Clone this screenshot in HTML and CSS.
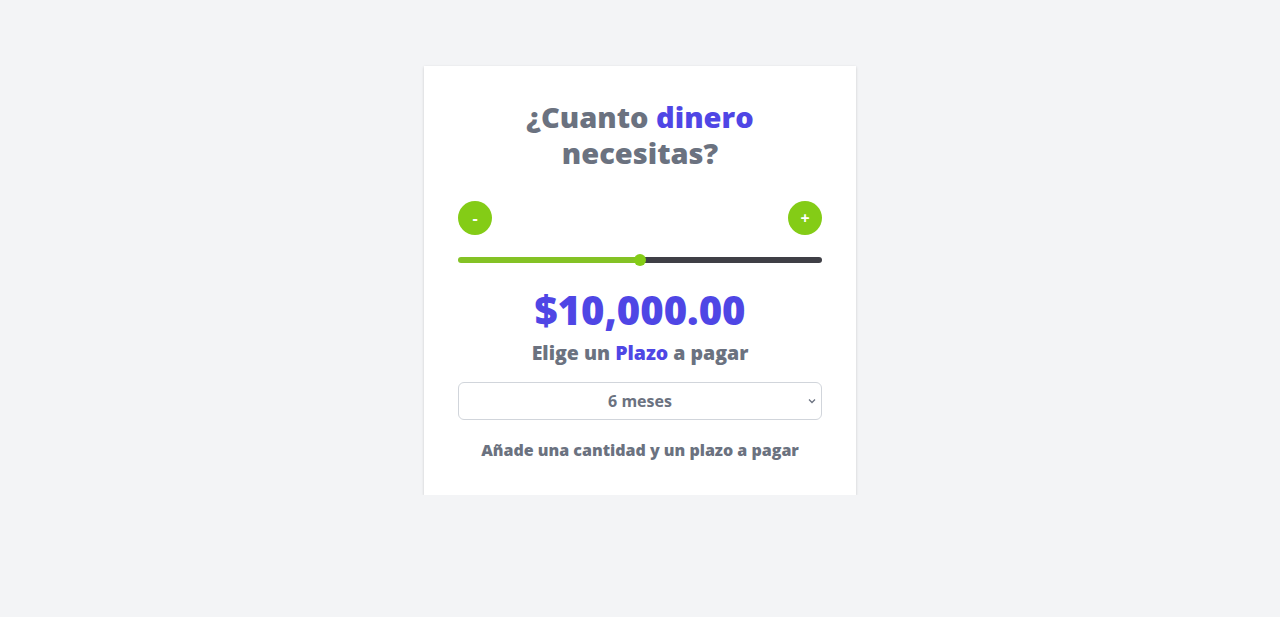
FILE: index.html
```html
<!DOCTYPE html>
<html lang="es">
<head>
<meta charset="utf-8">
<title>Préstamo</title>
<link rel="stylesheet" href="styles.css">
</head>
<body>
<main class="page">
  <section class="card">
    <h1 class="title">¿Cuanto <span class="accent">dinero</span> necesitas?</h1>
    <div class="controls">
      <button class="round-btn" type="button">-</button>
      <button class="round-btn" type="button">+</button>
    </div>
    <div class="slider">
      <div class="slider-fill"></div>
      <div class="slider-rest"></div>
      <span class="slider-thumb"></span>
    </div>
    <p class="amount">$10,000.00</p>
    <h2 class="subtitle">Elige un <span class="accent">Plazo</span> a pagar</h2>
    <div class="select-wrap">
      <div class="select">6 meses</div>
      <svg class="chevron" width="8" height="6" viewBox="0 0 8 6"><path d="M1 1.5 L4 4.5 L7 1.5" fill="none" stroke="#6b7280" stroke-width="1.3"/></svg>
    </div>
    <p class="note">Añade una cantidad y un plazo a pagar</p>
  </section>
</main>
</body>
</html>
```

FILE: styles.css
```css
* { box-sizing: border-box; }
html, body { margin: 0; padding: 0; }
body {
  background: #f3f4f6;
  font-family: "Open Sans", "Noto Sans", sans-serif;
  color: #6b7280;
}
.page {
  display: flex;
  justify-content: center;
  padding-top: 66px;
}
.card {
  width: 432px;
  background: #fff;
  box-shadow: 0 1px 3px rgba(0,0,0,0.12), 0 1px 2px rgba(0,0,0,0.06);
  padding: 33px 34px 33px;
  display: flex;
  flex-direction: column;
  text-align: center;
}
.title {
  margin: 0 auto;
  width: 260px;
  font-size: 29px;
  line-height: 36px;
  font-weight: 800;
  color: #6b7280;
}
.accent { color: #4f46e5; }
.controls {
  display: flex;
  justify-content: space-between;
  margin-top: 30px;
}
.round-btn {
  width: 34px;
  height: 34px;
  border-radius: 50%;
  border: 0;
  padding: 0;
  background: #84cc16;
  color: #fff;
  font-family: inherit;
  font-weight: 700;
  font-size: 16px;
  line-height: 34px;
}
.slider {
  position: relative;
  display: flex;
  height: 6px;
  margin-top: 22px;
}
.slider-fill {
  flex: 0 0 50%;
  background: #84c225;
  border-radius: 3px 0 0 3px;
}
.slider-rest {
  flex: 1;
  background: #3f3f46;
  border-radius: 0 3px 3px 0;
}
.slider-thumb {
  position: absolute;
  left: calc(50% - 6px);
  top: -3px;
  width: 12px;
  height: 12px;
  border-radius: 50%;
  background: #84cc16;
}
.amount {
  margin: 25px 0 0;
  font-size: 40px;
  line-height: 44px;
  font-weight: 800;
  color: #4f46e5;
}
.subtitle {
  margin: 7px 0 0;
  font-size: 19.5px;
  line-height: 28px;
  font-weight: 800;
  color: #6b7280;
}
.select-wrap {
  position: relative;
  margin-top: 15px;
}
.select {
  height: 38px;
  border: 1px solid #d1d5db;
  border-radius: 6px;
  font-size: 16px;
  line-height: 36px;
  font-weight: 700;
  color: #6b7280;
}
.chevron {
  position: absolute;
  right: 6px;
  top: 16px;
}
.note {
  margin: 18px 0 0;
  font-size: 16px;
  line-height: 24px;
  font-weight: 800;
  color: #6b7280;
}
```
